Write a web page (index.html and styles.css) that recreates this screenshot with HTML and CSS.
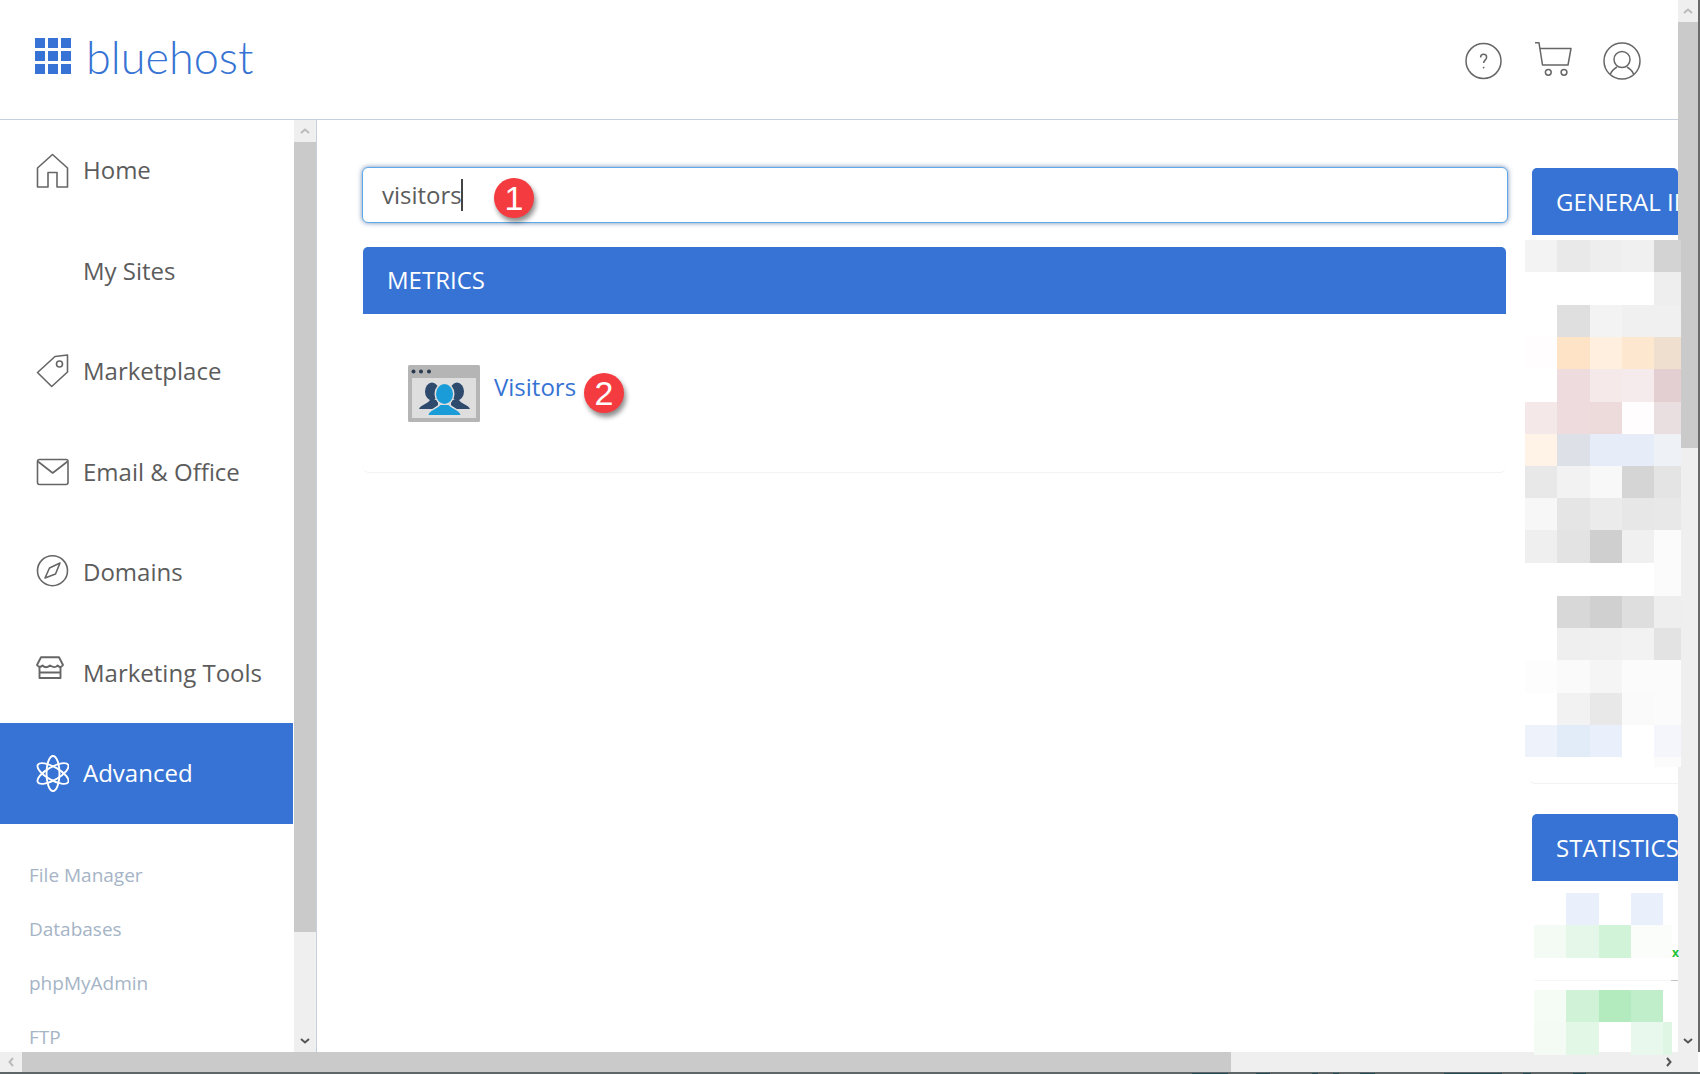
FILE: index.html
```html
<!DOCTYPE html>
<html lang="en">
<head>
<meta charset="utf-8">
<title>bluehost</title>
<link rel="stylesheet" href="styles.css">
</head>
<body>
<div class="window">
  <div class="upper">
    <div class="page">
      <header class="header">
        <div class="logo">
          <svg class="logo-mark" width="36" height="36" viewBox="0 0 36 36" fill="#3673d4">
            <rect x="0" y="0" width="10" height="10"/><rect x="13" y="0" width="10" height="10"/><rect x="26" y="0" width="10" height="10"/>
            <rect x="0" y="13" width="10" height="10"/><rect x="13" y="13" width="10" height="10"/><rect x="26" y="13" width="10" height="10"/>
            <rect x="0" y="26" width="10" height="10"/><rect x="13" y="26" width="10" height="10"/><rect x="26" y="26" width="10" height="10"/>
          </svg>
          <span class="logo-text">bluehost</span>
        </div>
        <div class="tools">
          <svg width="38" height="38" viewBox="0 0 38 38" fill="none" stroke="#666" stroke-width="1.5">
            <circle cx="19.500" cy="19" r="17.500"/>
            <path d="M16.600 15.500c0-2.200 1.300-3.200 3-3.200s3 1 3 2.900c0 2.800-3 3-3 5.800"/>
            <circle cx="19.600" cy="25.600" r=".9" fill="#666" stroke="none"/>
          </svg>
          <svg width="39" height="38" viewBox="0 0 39 38" fill="none" stroke="#666" stroke-width="1.5" stroke-linejoin="round">
            <path d="M2 .8H6L9.500 23H35L38 6.500H6.800"/>
            <circle cx="15.300" cy="30.300" r="2.900"/>
            <circle cx="31" cy="30.300" r="2.900"/>
          </svg>
          <svg width="38" height="38" viewBox="0 0 38 38" fill="none" stroke="#666" stroke-width="1.5">
            <circle cx="19" cy="19" r="18"/>
            <circle cx="19" cy="17.500" r="8"/>
            <path d="M7.500 32Q9 28 14 25M30.500 32Q29 28 24 25"/>
          </svg>
        </div>
      </header>

      <div class="body">
        <aside class="sidebar">
          <nav class="nav">
            <a class="nav-item">
              <svg class="nav-icon" viewBox="0 0 34 40"><path d="M2.500 37V18L17.500 4.500 32.500 18V37H22V22.500H13V37Z"/></svg>
              <span>Home</span>
            </a>
            <a class="nav-item">
              <span class="nav-icon"></span>
              <span>My Sites</span>
            </a>
            <a class="nav-item">
              <svg class="nav-icon" viewBox="0 0 34 40"><path d="M2.500 21.500 20 5.500 32.500 4V21L16.700 35.500Z"/><circle cx="24.500" cy="13" r="3"/></svg>
              <span>Marketplace</span>
            </a>
            <a class="nav-item">
              <svg class="nav-icon" viewBox="0 0 34 40"><rect x="2.500" y="8.500" width="30.500" height="25" rx="2"/><path d="M3 10.500 17.700 22 32.500 10.500"/></svg>
              <span>Email &amp; Office</span>
            </a>
            <a class="nav-item">
              <svg class="nav-icon" viewBox="0 0 34 40"><circle cx="17.500" cy="18.700" r="15"/><path d="M25 11 14.500 16 10 26 20.500 22Z"/></svg>
              <span>Domains</span>
            </a>
            <a class="nav-item">
              <svg class="nav-icon nav-icon-bold" viewBox="0 0 34 40"><path d="M2 13 6 5.200H24L28 13C26 16 24 15 22.500 13.500 20.500 16 18 15.500 15 13.500 12.500 15.500 10 16 7.500 13.500 5.500 15.500 3.500 15 2 13Z"/><path d="M4.500 14.500V26H25.500V14.500M4.500 20.500H25.500"/></svg>
              <span>Marketing Tools</span>
            </a>
            <a class="nav-item nav-active">
              <svg class="nav-icon nav-icon-bold" viewBox="0 0 34 40"><ellipse cx="18" cy="20.500" rx="6.500" ry="17.500"/><ellipse cx="18" cy="20.500" rx="6.500" ry="17.500" transform="rotate(60 18 20.500)"/><ellipse cx="18" cy="20.500" rx="6.500" ry="17.500" transform="rotate(-60 18 20.500)"/></svg>
              <span>Advanced</span>
            </a>
            <ul class="subnav">
              <li>File Manager</li>
              <li>Databases</li>
              <li>phpMyAdmin</li>
              <li>FTP</li>
            </ul>
          </nav>
          <div class="vbar vbar-side">
            <div class="sb-btn"><svg class="chev chev-off" viewBox="0 0 10 6"><path d="M1 5 5 1.500 9 5"/></svg></div>
            <div class="sb-thumb sb-thumb-side"></div>
            <div class="sb-track"></div>
            <div class="sb-btn"><svg class="chev" viewBox="0 0 10 6"><path d="M1 1 5 4.500 9 1"/></svg></div>
          </div>
        </aside>

        <main class="main">
          <div class="search">
            <span class="search-text">visitors</span><span class="caret"></span>
            <span class="badge badge-one">1</span>
          </div>
          <section class="metrics">
            <h2 class="bar">METRICS</h2>
            <div class="metric-row">
              <svg class="visitors-icon" width="72" height="57" viewBox="0 0 72 57">
                <rect width="72" height="57" rx="1.500" fill="#b5b5b5"/>
                <rect x="4" y="13" width="64" height="40" fill="#dedede"/>
                <circle cx="5.500" cy="6.500" r="2" fill="#2b3a4e"/><circle cx="13" cy="6.500" r="2" fill="#2b3a4e"/><circle cx="21" cy="6.500" r="2" fill="#2b3a4e"/>
                <g fill="#2e4a6d">
                  <ellipse cx="24" cy="26.500" rx="7" ry="9"/>
                  <path d="M11 44c1-4 9-5 11-9h8v9Z"/>
                  <ellipse cx="49" cy="26.500" rx="7" ry="9"/>
                  <path d="M62 44c-1-4-9-5-11-9h-8v9Z"/>
                </g>
                <g fill="#dedede" stroke="#dedede" stroke-width="3">
                  <ellipse cx="36.500" cy="29" rx="8.500" ry="10"/>
                  <path d="M20.500 50c1-5 9-6 12-10h8c3 4 11 5 12 10Z"/>
                </g>
                <g fill="#1a9cd8">
                  <ellipse cx="36.500" cy="29" rx="8.500" ry="10"/>
                  <path d="M20.500 50c1-5 9-6 12-10h8c3 4 11 5 12 10Z"/>
                </g>
              </svg>
              <a class="metric-link">Visitors</a>
              <span class="badge badge-two">2</span>
            </div>
          </section>
        </main>

        <aside class="rail">
          <section class="card">
            <h2 class="bar bar-clip">GENERAL INFORMATION</h2>
            <svg class="mosaic" width="156" height="527" viewBox="0 0 156 527" shape-rendering="crispEdges">
              <rect y="0" x="0" width="32" height="32" fill="#f3f3f3"/><rect y="0" x="32" width="33" height="32" fill="#e9e9e9"/><rect y="0" x="65" width="32" height="32" fill="#eeeeee"/><rect y="0" x="97" width="32" height="32" fill="#f0f0f0"/><rect y="0" x="129" width="27" height="32" fill="#d3d3d3"/>
              <rect y="32" x="129" width="27" height="33" fill="#eeeeee"/>
              <rect y="65" x="32" width="33" height="32" fill="#dfdfdf"/><rect y="65" x="65" width="32" height="32" fill="#f3f3f3"/><rect y="65" x="97" width="32" height="32" fill="#f0f0f0"/><rect y="65" x="129" width="27" height="32" fill="#f0f0f0"/>
              <rect y="97" x="0" width="32" height="32" fill="#fffdfd"/><rect y="97" x="32" width="33" height="32" fill="#ffe3c6"/><rect y="97" x="65" width="32" height="32" fill="#ffefdf"/><rect y="97" x="97" width="32" height="32" fill="#fde7cf"/><rect y="97" x="129" width="27" height="32" fill="#efdfcf"/>
              <rect y="129" x="32" width="33" height="33" fill="#eddbdd"/><rect y="129" x="65" width="32" height="33" fill="#f5e9ea"/><rect y="129" x="97" width="32" height="33" fill="#f5ebec"/><rect y="129" x="129" width="27" height="33" fill="#e3cfd1"/>
              <rect y="162" x="0" width="32" height="32" fill="#f4e8e8"/><rect y="162" x="32" width="33" height="32" fill="#eddbdd"/><rect y="162" x="65" width="32" height="32" fill="#eddada"/><rect y="162" x="97" width="32" height="32" fill="#fffdfd"/><rect y="162" x="129" width="27" height="32" fill="#e9dfe0"/>
              <rect y="194" x="0" width="32" height="32" fill="#fff3e8"/><rect y="194" x="32" width="33" height="32" fill="#dde0e6"/><rect y="194" x="65" width="32" height="32" fill="#e6edf9"/><rect y="194" x="97" width="32" height="32" fill="#e6edf9"/><rect y="194" x="129" width="27" height="32" fill="#eef1f6"/>
              <rect y="226" x="0" width="32" height="32" fill="#e8e8e8"/><rect y="226" x="32" width="33" height="32" fill="#f2f2f2"/><rect y="226" x="65" width="32" height="32" fill="#f8f8f8"/><rect y="226" x="97" width="32" height="32" fill="#d5d5d5"/><rect y="226" x="129" width="27" height="32" fill="#e4e4e4"/>
              <rect y="258" x="0" width="32" height="32" fill="#f7f7f7"/><rect y="258" x="32" width="33" height="32" fill="#e5e5e5"/><rect y="258" x="65" width="32" height="32" fill="#ebebeb"/><rect y="258" x="97" width="32" height="32" fill="#e7e7e7"/><rect y="258" x="129" width="27" height="32" fill="#e8e8e8"/>
              <rect y="290" x="0" width="32" height="33" fill="#efefef"/><rect y="290" x="32" width="33" height="33" fill="#e3e3e3"/><rect y="290" x="65" width="32" height="33" fill="#cfcfcf"/><rect y="290" x="97" width="32" height="33" fill="#f0f0f0"/><rect y="290" x="129" width="27" height="33" fill="#fbfbfb"/>
              <rect y="323" x="129" width="27" height="33" fill="#fbfbfb"/>
              <rect y="356" x="32" width="33" height="32" fill="#d8d8d8"/><rect y="356" x="65" width="32" height="32" fill="#d0d0d0"/><rect y="356" x="97" width="32" height="32" fill="#dedede"/><rect y="356" x="129" width="27" height="32" fill="#eeeeee"/>
              <rect y="388" x="32" width="33" height="32" fill="#efefef"/><rect y="388" x="65" width="32" height="32" fill="#f0f0f0"/><rect y="388" x="97" width="32" height="32" fill="#f2f2f2"/><rect y="388" x="129" width="27" height="32" fill="#e3e3e3"/>
              <rect y="420" x="0" width="32" height="33" fill="#fdfdfd"/><rect y="420" x="32" width="33" height="33" fill="#fafafa"/><rect y="420" x="65" width="32" height="33" fill="#f5f5f5"/><rect y="420" x="97" width="32" height="33" fill="#fbfbfb"/><rect y="420" x="129" width="27" height="33" fill="#fbfbfb"/>
              <rect y="453" x="32" width="33" height="32" fill="#f2f2f2"/><rect y="453" x="65" width="32" height="32" fill="#e8e8e8"/><rect y="453" x="97" width="32" height="32" fill="#fafafa"/><rect y="453" x="129" width="27" height="32" fill="#fbfbfb"/>
              <rect y="485" x="0" width="32" height="32" fill="#edf2fb"/><rect y="485" x="32" width="33" height="32" fill="#e2ecf9"/><rect y="485" x="65" width="32" height="32" fill="#e9f0fb"/><rect y="485" x="97" width="32" height="32" fill="#ffffff"/><rect y="485" x="129" width="27" height="32" fill="#f4f6fb"/>
              <rect y="517" x="129" width="27" height="10" fill="#fbfbfb"/>
            </svg>
            <div class="card-foot"></div>
          </section>

          <section class="card card-stats">
            <h2 class="bar bar-clip">STATISTICS</h2>
            <div class="stats-top">
              <svg class="mosaic-plain" width="144" height="65" viewBox="0 0 144 65" shape-rendering="crispEdges">
                <rect x="32" y="0" width="33" height="32" fill="#e9f0fb"/><rect x="97" y="0" width="32" height="32" fill="#e9f0fb"/>
                <rect x="0" y="32" width="32" height="33" fill="#f3fbf4"/><rect x="32" y="32" width="33" height="33" fill="#e4f7e8"/><rect x="65" y="32" width="32" height="33" fill="#d1f3d8"/><rect x="97" y="32" width="41" height="33" fill="#fafdfa"/>
              </svg>
              <span class="mark">x</span>
            </div>
            <div class="stats-rule"></div>
            <svg class="mosaic mosaic-low" width="144" height="65" viewBox="0 0 144 65" shape-rendering="crispEdges">
              <rect x="0" y="0" width="32" height="32" fill="#f5fcf6"/><rect x="32" y="0" width="33" height="32" fill="#d0f3d7"/><rect x="65" y="0" width="32" height="32" fill="#b3ebbf"/><rect x="97" y="0" width="32" height="32" fill="#c0eecb"/>
              <rect x="0" y="32" width="32" height="33" fill="#f3fbf4"/><rect x="32" y="32" width="33" height="33" fill="#e2f7e6"/><rect x="97" y="32" width="32" height="33" fill="#e8f8ec"/><rect x="129" y="32" width="9" height="33" fill="#e0f6e5"/>
            </svg>
          </section>
        </aside>
      </div>
    </div>

    <div class="vbar vbar-page">
      <div class="sb-btn"><svg class="chev chev-off" viewBox="0 0 10 6"><path d="M1 5 5 1.500 9 5"/></svg></div>
      <div class="sb-thumb sb-thumb-page"></div>
      <div class="sb-track"></div>
      <div class="sb-btn"><svg class="chev" viewBox="0 0 10 6"><path d="M1 1 5 4.500 9 1"/></svg></div>
    </div>
    <div class="edge-right"></div>
  </div>

  <div class="hbar">
    <div class="sb-btn"><svg class="chev-h chev-off" viewBox="0 0 6 10"><path d="M5 1 1.500 5 5 9"/></svg></div>
    <div class="hthumb"></div>
    <div class="sb-track"></div>
    <div class="sb-btn hbtn-end"><svg class="chev-h" viewBox="0 0 6 10"><path d="M1 1 4.500 5 1 9"/></svg></div>
  </div>
  <div class="edge-bottom"></div>
</div>
</body>
</html>
```
FILE: styles.css
```css
* { box-sizing: border-box; }
html, body { margin: 0; padding: 0; background: #fff; }
body { font-family: "Open Sans", sans-serif; color: #5c5c5c; }
h2 { margin: 0; font-weight: 400; }
a { color: inherit; text-decoration: none; }

.window { width: 1700px; height: 1074px; overflow: hidden; display: flex; flex-direction: column; }
.upper { height: 1052px; display: flex; }
.page { width: 1678px; height: 1052px; display: flex; flex-direction: column; }

/* header */
.header { height: 120px; flex: none; display: flex; justify-content: space-between; align-items: center; border-bottom: 1px solid #c5d0de; padding: 0 37px 0 35px; }
.logo { display: flex; align-items: center; gap: 15px; height: 36px; margin-bottom: 7px; }
.logo-mark { display: block; }
.logo-text { font-family: "Lato", sans-serif; font-weight: 300; font-size: 45px; line-height: 38px; padding-top: 2px; color: #3673d4; }
.tools { display: flex; gap: 31px; margin-top: 3px; }
.tools svg { display: block; }

/* body */
.body { flex: 1; display: flex; min-height: 0; }
.sidebar { width: 317px; flex: none; display: flex; border-right: 1px solid #c5d0de; height: 932px; }
.nav { width: 294px; flex: none; overflow: hidden; }
.nav-item { display: flex; align-items: center; gap: 14px; height: 100.5px; padding: 0 0 1px 35px; width: 293px; font-size: 24px; color: #5c5c5c; }
.nav-icon { width: 34px; height: 40px; flex: none; fill: none; stroke: #666; stroke-width: 1.6; stroke-linejoin: round; }
.nav-icon-bold { stroke-width: 1.9; }
.nav-active { background: #3673d4; color: #fff; }
.nav-active .nav-icon { stroke: #fff; }
.subnav { list-style: none; margin: 24px 0 0; padding: 0 0 0 29px; font-size: 19px; color: #a5b4c6; }
.subnav li { height: 54.2px; line-height: 54px; }

/* scrollbars */
.vbar { display: flex; flex-direction: column; background: #efefef; flex: none; }
.vbar-side { width: 22px; height: 932px; }
.vbar-page { width: 20px; height: 1052px; }
.sb-btn { height: 22px; flex: none; display: flex; align-items: center; justify-content: center; background: #efefef; }
.sb-thumb { background: #cacaca; flex: none; }
.sb-thumb-side { height: 790px; }
.sb-thumb-page { height: 426px; }
.sb-track { flex: 1; background: #efefef; }
.chev { width: 10px; height: 6px; fill: none; stroke: #555; stroke-width: 2; }
.chev-h { width: 6px; height: 10px; fill: none; stroke: #555; stroke-width: 2; }
.chev-off { stroke: #bbb; }
.hbar { height: 20px; flex: none; width: 1698px; display: flex; background: #efefef; }
.hbar .sb-btn { width: 22px; height: 20px; }
.hbar .hbtn-end { width: 36px; justify-content: flex-start; padding-left: 4px; }
.hthumb { width: 1209px; background: #cacaca; }
.edge-right { width: 2px; height: 1052px; background: #6a6a6a; flex: none; }
.edge-bottom {
  height: 2px;
  background-color: #5f6668;
  background-image:
    linear-gradient(#1d4a55, #1d4a55), linear-gradient(#1d4a55, #1d4a55),
    linear-gradient(#1d4a55, #1d4a55), linear-gradient(#1d4a55, #1d4a55),
    linear-gradient(#1d4a55, #1d4a55), linear-gradient(#1d4a55, #1d4a55),
    linear-gradient(#1d4a55, #1d4a55), linear-gradient(#1d4a55, #1d4a55);
  background-repeat: no-repeat;
  background-size: 36px 1px, 14px 1px, 6px 1px, 6px 1px, 15px 1px, 58px 1px, 8px 1px, 13px 1px;
  background-position: 1192px 1px, 1256px 1px, 1312px 1px, 1333px 1px, 1360px 1px, 1444px 1px, 1523px 1px, 1573px 1px;
}

/* main */
.main { width: 1191px; flex: none; padding: 47px 0 0 45px; }
.search { position: relative; width: 1146px; height: 56px; border: 1px solid #5fa9e8; border-radius: 6px; box-shadow: 0 0 5px rgba(50, 90, 150, .7); padding-left: 19px; display: flex; align-items: center; background: #fff; }
.search-text { font-size: 24px; color: #5c5c5c; margin-bottom: 2px; }
.caret { width: 2px; height: 32px; background: #444; margin-left: -1px; }
.badge { position: absolute; width: 40px; height: 40px; border-radius: 50%; background: #f43b3f; color: #fff; font-family: "Liberation Sans", sans-serif; font-size: 34px; line-height: 40px; text-align: center; box-shadow: 2px 4px 5px rgba(0, 0, 0, .45); }
.badge-one { left: 131px; top: 10px; }
.metrics { margin: 24px 0 0 1px; width: 1143px; height: 226px; border-bottom: 1px solid #f3f3f3; border-radius: 0 0 6px 6px; }
.bar { height: 67px; background: #3673d4; color: #fff; font-size: 24px; line-height: 65px; padding-left: 24px; border-radius: 5px 5px 0 0; white-space: nowrap; overflow: hidden; }
.metric-row { position: relative; display: flex; align-items: flex-start; padding: 51px 0 0 45px; }
.visitors-icon { display: block; flex: none; }
.metric-link { margin: 5px 0 0 14px; color: #3673d4; font-size: 24px; line-height: 33px; }
.badge-two { left: 221px; top: 59px; }

/* right rail */
.rail { width: 146px; flex: none; margin-left: 24px; padding-top: 48px; }
.bar-clip { line-height: 67px; }
.card { position: relative; z-index: 2; }
.mosaic { display: block; margin: 5px 0 0 -7px; position: relative; }
.card-foot { height: 17px; margin-left: -3px; width: 149px; border-bottom: 1px solid #f2f2f2; border-radius: 0 0 0 6px; }
.card-stats { margin-top: 30px; }
.stats-top { position: relative; width: 144px; margin: 12px 0 0 2px; height: 87px; }
.mosaic-plain { display: block; }
.mark { position: absolute; left: 138px; top: 51px; color: #1fc33a; font-size: 12px; line-height: 18px; font-weight: 700; }
.stats-rule { height: 1px; margin-left: 2px; width: 144px; background: linear-gradient(to right, #f7f7f7 95%, #c4c4c4 95%); }
.mosaic-low { margin: 9px 0 0 2px; }
```
